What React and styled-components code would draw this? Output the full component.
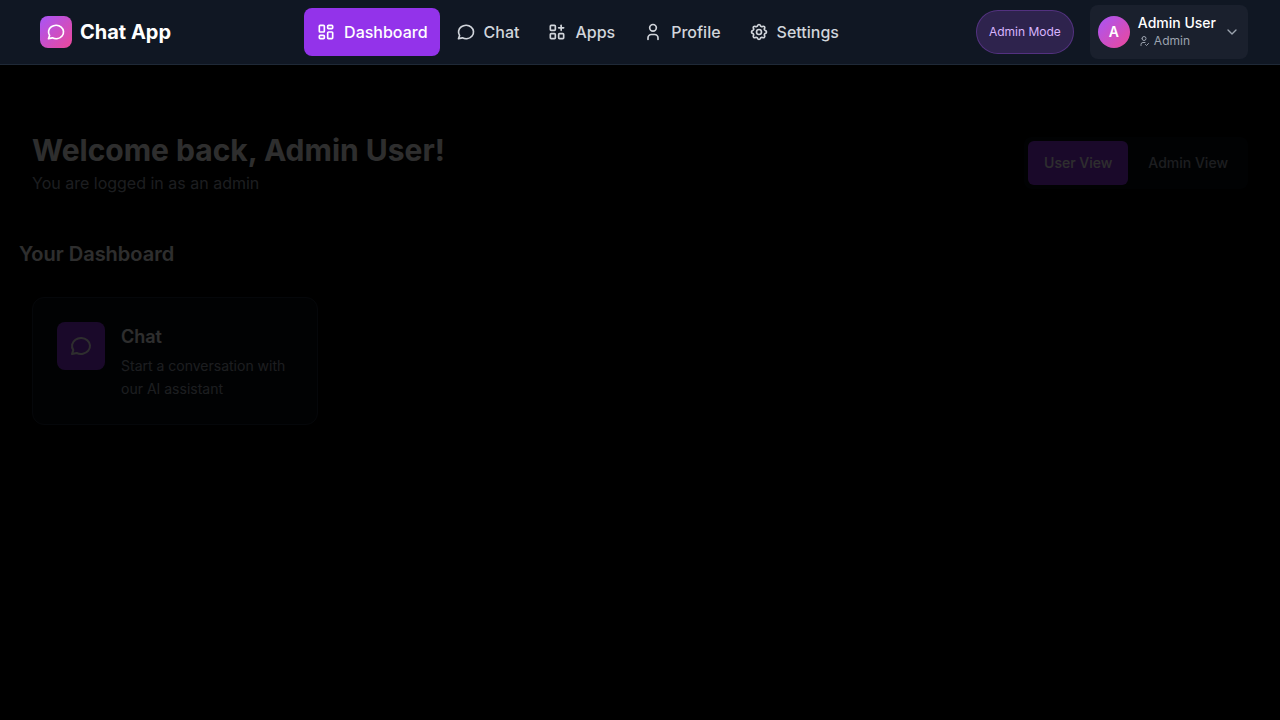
import React from "react";
import styled, { createGlobalStyle, css } from "styled-components";
import {
  TbApps,
  TbChevronDown,
  TbLayoutDashboard,
  TbMessageCircle,
  TbSettings,
  TbUser,
  TbUserCheck,
} from "react-icons/tb";

const GlobalStyle = createGlobalStyle`
  *, *::before, *::after { box-sizing: border-box; }
  body {
    margin: 0;
    background: #000;
    color: #fff;
    font-family: Inter, "Liberation Sans", sans-serif;
    font-size: 16px;
    line-height: 24px;
  }
  h1, h2, h3, p { margin: 0; }
  button { font: inherit; color: inherit; border: 0; background: none; cursor: pointer; }
  a { color: inherit; text-decoration: none; }
  svg { flex-shrink: 0; display: block; }
`;

const brandGradient = css`
  background: linear-gradient(to bottom right, #a855f7, #ec4899);
`;

const Header = styled.header`
  display: flex;
  align-items: center;
  justify-content: space-between;
  min-height: 65px;
  padding: 0 32px;
  background: #101723;
  border-bottom: 1px solid #1f2937;
`;

const Brand = styled.a`
  display: flex;
  align-items: center;
  gap: 8px;
  padding: 8px;
  font-size: 20px;
  line-height: 28px;
  font-weight: 700;
`;

const BrandMark = styled.span`
  ${brandGradient}
  display: grid;
  place-items: center;
  width: 32px;
  height: 32px;
  border-radius: 8px;
`;

const Nav = styled.nav`
  display: flex;
  gap: 4px;
`;

const NavLink = styled.a`
  display: flex;
  align-items: center;
  gap: 8px;
  height: 48px;
  padding: 0 12px;
  border-radius: 8px;
  font-weight: 500;
  color: ${(p) => (p.$active ? "#fff" : "#d1d5db")};
  background: ${(p) => (p.$active ? "#9333ea" : "transparent")};
`;

const Account = styled.div`
  display: flex;
  align-items: center;
  gap: 16px;
`;

const ModeButton = styled.button`
  height: 44px;
  padding: 0 12px;
  border: 1px solid rgba(168, 85, 247, 0.3);
  border-radius: 22px;
  background: rgba(168, 85, 247, 0.2);
  color: #d8b4fe;
  font-size: 12px;
  line-height: 16px;
`;

const UserButton = styled.button`
  display: flex;
  align-items: center;
  gap: 8px;
  padding: 8px;
  border-radius: 8px;
  background: #1a202d;
  color: #9ca3af;
  text-align: left;
`;

const Avatar = styled.span`
  ${brandGradient}
  display: grid;
  place-items: center;
  width: 32px;
  height: 32px;
  border-radius: 50%;
  color: #fff;
  font-size: 14px;
  line-height: 20px;
  font-weight: 600;
`;

const UserText = styled.span`
  display: flex;
  flex-direction: column;
  padding-bottom: 2px;
`;

const UserName = styled.span`
  color: #fff;
  font-size: 14px;
  line-height: 20px;
  font-weight: 500;
`;

const UserRole = styled.span`
  display: flex;
  align-items: center;
  gap: 4px;
  font-size: 12px;
  line-height: 16px;
`;

const Main = styled.main`
  padding: 66px 32px 32px;
  opacity: 0.18;
`;

const Welcome = styled.section`
  display: flex;
  align-items: center;
  justify-content: space-between;
  gap: 24px;
`;

const PageTitle = styled.h1`
  margin-bottom: 2px;
  font-size: 30px;
  line-height: 38px;
  font-weight: 700;
`;

const Subtitle = styled.p`
  color: #9ca3af;
`;

const ViewSwitch = styled.div`
  display: flex;
  gap: 4px;
  padding: 4px;
  border-radius: 8px;
  background: #090d15;
`;

const ViewButton = styled.button`
  height: 44px;
  padding: 0 16px;
  border-radius: 6px;
  font-size: 14px;
  line-height: 20px;
  font-weight: 500;
  color: ${(p) => (p.$active ? "#fff" : "#9ca3af")};
  background: ${(p) => (p.$active ? "#9333ea" : "transparent")};
`;

const SectionTitle = styled.h2`
  margin: 45px -13px 29px;
  font-size: 20px;
  line-height: 28px;
  font-weight: 600;
`;

const CardGrid = styled.section`
  display: grid;
  grid-template-columns: repeat(auto-fill, minmax(280px, 1fr));
  gap: 24px;
`;

const Card = styled.a`
  display: flex;
  align-items: flex-start;
  gap: 16px;
  padding: 24px;
  border: 1px solid #1f2937;
  border-radius: 12px;
  background: #090d15;
`;

const CardIcon = styled.span`
  display: grid;
  place-items: center;
  flex-shrink: 0;
  width: 48px;
  height: 48px;
  border-radius: 8px;
  background: #9333ea;
`;

const CardTitle = styled.h3`
  margin-bottom: 3px;
  font-size: 18px;
  line-height: 29px;
  font-weight: 600;
`;

const CardText = styled.p`
  color: #9ca3af;
  font-size: 14px;
  line-height: 23px;
`;

const links = [
  { label: "Dashboard", Icon: TbLayoutDashboard, active: true },
  { label: "Chat", Icon: TbMessageCircle },
  { label: "Apps", Icon: TbApps },
  { label: "Profile", Icon: TbUser },
  { label: "Settings", Icon: TbSettings },
];

export default function App() {
  return (
    <>
      <GlobalStyle />
      <Header>
        <Brand href="#home">
          <BrandMark>
            <TbMessageCircle size={20} />
          </BrandMark>
          Chat App
        </Brand>
        <Nav aria-label="Main">
          {links.map(({ label, Icon, active }) => (
            <NavLink
              key={label}
              href={`#${label.toLowerCase()}`}
              $active={active}
              aria-current={active ? "page" : undefined}
            >
              <Icon size={20} />
              {label}
            </NavLink>
          ))}
        </Nav>
        <Account>
          <ModeButton type="button">Admin Mode</ModeButton>
          <UserButton type="button" aria-haspopup="menu">
            <Avatar>A</Avatar>
            <UserText>
              <UserName>Admin User</UserName>
              <UserRole>
                <TbUserCheck size={12} />
                Admin
              </UserRole>
            </UserText>
            <TbChevronDown size={16} />
          </UserButton>
        </Account>
      </Header>
      <Main>
        <Welcome>
          <div>
            <PageTitle>Welcome back, Admin User!</PageTitle>
            <Subtitle>You are logged in as an admin</Subtitle>
          </div>
          <ViewSwitch role="group" aria-label="Dashboard view">
            <ViewButton type="button" $active aria-pressed="true">
              User View
            </ViewButton>
            <ViewButton type="button" aria-pressed="false">
              Admin View
            </ViewButton>
          </ViewSwitch>
        </Welcome>
        <SectionTitle>Your Dashboard</SectionTitle>
        <CardGrid>
          <Card href="#chat">
            <CardIcon>
              <TbMessageCircle size={24} />
            </CardIcon>
            <div>
              <CardTitle>Chat</CardTitle>
              <CardText>Start a conversation with our AI assistant</CardText>
            </div>
          </Card>
        </CardGrid>
      </Main>
    </>
  );
}
